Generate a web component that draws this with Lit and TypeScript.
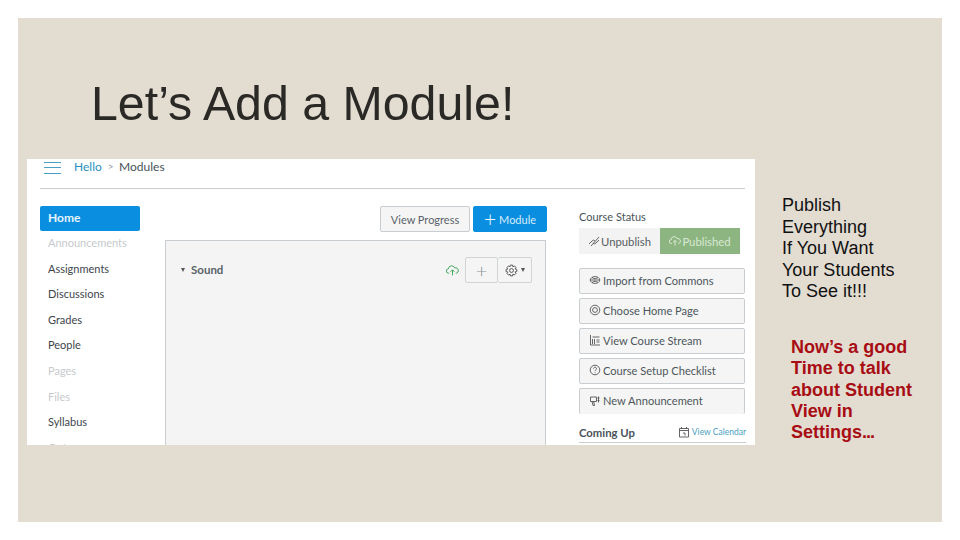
import { LitElement, html, css, svg } from 'lit';
import { customElement } from 'lit/decorators.js';

const navItems = [
  { label: 'Announcements', off: true },
  { label: 'Assignments' },
  { label: 'Discussions' },
  { label: 'Grades' },
  { label: 'People' },
  { label: 'Pages', off: true },
  { label: 'Files', off: true },
  { label: 'Syllabus' },
  { label: 'Outcomes', off: true },
];

const icon = (body: unknown, color = '#555') => html`<svg
  class="ico"
  viewBox="0 0 12 12"
  fill="none"
  stroke=${color}
  stroke-width="0.9"
>${body}</svg>`;

const cloud = svg`<path d="M3 8.500H2.400a2 2 0 0 1-.2-4A3 3 0 0 1 8 3.600a2.400 2.400 0 0 1 1.600 4.900H9" /><path d="M6 10.500V5.500M4.200 7.200 6 5.400l1.800 1.800" />`;

const sideButtons = [
  {
    label: 'Import from Commons',
    glyph: svg`<ellipse cx="6" cy="6" rx="4.800" ry="3.400" /><path d="M1.200 6h9.600M3 3.500c2 1.600 4 1.600 6 0M3 8.500c2-1.600 4-1.600 6 0" />`,
  },
  {
    label: 'Choose Home Page',
    glyph: svg`<circle cx="6" cy="6" r="4.800" /><circle cx="6" cy="6" r="2.400" />`,
  },
  {
    label: 'View Course Stream',
    glyph: svg`<path d="M1.500 1v10M1.500 11h9.500M3.500 3h7M3.500 5v5M5.500 5v5M7.500 6h3M7.500 8h3" />`,
  },
  {
    label: 'Course Setup Checklist',
    glyph: svg`<circle cx="6" cy="6" r="4.800" /><path d="M4.500 4.600a1.500 1.500 0 1 1 2.200 1.400c-.5.3-.7.6-.7 1.100M6 8.300v.8" />`,
  },
  {
    label: 'New Announcement',
    glyph: svg`<path d="M1.500 2h6v4.500h-6zM3 6.500l1 4h1.500l-.8-4M9.500 1.500v6M8.500 3h2M8.500 5.500h2" />`,
  },
];

@customElement('app-root')
export class AppRoot extends LitElement {
  static styles = css`
    :host {
      display: block;
      width: 960px;
      height: 540px;
      padding: 18px;
      box-sizing: border-box;
      background: #fff;
      font-family: 'Liberation Sans', Arial, sans-serif;
    }

    .slide {
      height: 504px;
      padding-left: 9px;
      background: #e2dcd1;
      overflow: hidden;
    }

    .title {
      height: 141px;
      box-sizing: border-box;
      margin: 0 0 0 64px;
      padding-top: 57px;
      color: #2a2926;
      font-size: 48.300px;
      line-height: 56px;
      font-weight: 400;
    }

    .row {
      display: flex;
    }

    .shot {
      width: 728px;
      height: 286px;
      flex: none;
      background: #fff;
      overflow: hidden;
      font-family: Lato, sans-serif;
      color: #3d454c;
    }

    .crumbs {
      height: 29px;
      margin: 0 10px 0 13px;
      border-bottom: 1px solid #c7cdd1;
      display: flex;
      align-items: flex-start;
      font-size: 12px;
      line-height: 15px;
    }

    .burger {
      width: 17px;
      height: 12px;
      margin: 3px 13px 0 4px;
      border-top: 1px solid #4a9fc4;
      border-bottom: 1px solid #4a9fc4;
      position: relative;
      box-sizing: border-box;
    }

    .burger::after {
      content: '';
      position: absolute;
      left: 0;
      right: 0;
      top: 4px;
      height: 1px;
      background: #4a9fc4;
    }

    .crumbs a {
      color: #2d8fc0;
    }

    .crumbs .sep {
      margin: 0 5.500px 0 6px;
      color: #8b969e;
      font-size: 10px;
    }

    .crumbs .here {
      color: #4a5359;
    }

    .body {
      display: flex;
      padding: 17px 0 0 13px;
    }

    .nav {
      width: 100px;
      flex: none;
      margin-right: 25px;
    }

    .nav div {
      height: 25.600px;
      padding-left: 8px;
      font-size: 11px;
      line-height: 25.600px;
      white-space: nowrap;
    }

    .nav .off {
      color: #c6cacd;
    }

    .nav .home {
      height: 25px;
      margin-bottom: -1px;
      background: #0a8fe0;
      border-radius: 2px;
      color: #e6f4fc;
      font-weight: 700;
      font-size: 12px;
      line-height: 23px;
    }

    .main {
      width: 381px;
      flex: none;
      margin-right: 33px;
    }

    .actions {
      display: flex;
      justify-content: flex-end;
      gap: 3px;
      margin-right: -1px;
      height: 34px;
    }

    .btn {
      height: 26px;
      box-sizing: border-box;
      display: flex;
      align-items: center;
      justify-content: center;
      border: 1px solid #c7cdd1;
      border-radius: 2px;
      background: #f5f5f5;
      font-size: 11px;
      white-space: nowrap;
    }

    .progress {
      width: 90px;
      color: #5a6268;
    }

    .add {
      width: 74px;
      gap: 3px;
      border-color: #0a8fe0;
      background: #0a8fe0;
      color: #d5ecfa;
    }

    .add b {
      font-weight: 300;
      font-size: 21px;
      line-height: 18px;
      color: #fff;
    }

    .panel {
      height: 260px;
      box-sizing: border-box;
      border: 1px solid #c7cdd1;
      background: #f4f4f4;
      padding: 16px 13px 0 15px;
    }

    .module {
      display: flex;
      align-items: center;
      height: 26px;
      font-size: 11.500px;
      font-weight: 700;
      color: #5a6268;
    }

    .caret {
      width: 0;
      height: 0;
      margin-right: 6px;
      border-left: 2.500px solid transparent;
      border-right: 2.500px solid transparent;
      border-top: 4px solid #555;
    }

    .module .name {
      flex: 1;
      padding-bottom: 2px;
    }

    .module .ico {
      width: 13px;
      height: 13px;
    }

    .tool {
      height: 26px;
      box-sizing: border-box;
      display: flex;
      align-items: center;
      justify-content: center;
      border: 1px solid #d0d4d7;
      border-radius: 2px;
      background: #f5f5f5;
    }

    .tool.plus {
      width: 33px;
      margin-left: 6px;
      color: #8b9298;
      font-size: 20px;
      font-weight: 300;
    }

    .tool.gear {
      width: 34px;
      gap: 3px;
      border-left: 0;
    }

    .tool.gear .caret {
      margin: 0;
    }

    .aside {
      width: 166px;
      flex: none;
      margin-top: 3px;
    }

    .aside h4 {
      margin: 0 0 4px;
      height: 15px;
      font-size: 11px;
      line-height: 15px;
      font-weight: 400;
      color: #4a5359;
    }

    .status {
      display: flex;
      height: 26px;
      width: 161px;
      margin-bottom: 14px;
      font-size: 11.300px;
    }

    .status div {
      display: flex;
      align-items: center;
      justify-content: center;
      gap: 1px;
    }

    .unpub {
      width: 81px;
      background: #f3f3f3;
      color: #555c62;
    }

    .pub {
      flex: 1;
      background: #8db581;
      color: #d8e8d3;
    }

    .ico {
      width: 12px;
      height: 12px;
      flex: none;
    }

    .side {
      display: flex;
      flex-direction: column;
      gap: 4px;
    }

    .side .btn {
      justify-content: flex-start;
      gap: 2px;
      padding: 0 0 2px 9px;
      color: #4d555b;
      font-size: 11.100px;
    }

    .side .btn:last-child {
      border-bottom: 0;
    }

    .coming {
      display: flex;
      align-items: center;
      justify-content: space-between;
      height: 26px;
      margin: 3px -1px 0 0;
      padding-top: 5px;
      box-sizing: border-box;
      border-bottom: 1px solid #c7cdd1;
      font-size: 11.300px;
      font-weight: 700;
      color: #4a5359;
    }

    .coming span {
      display: flex;
      align-items: center;
      gap: 2px;
      font-size: 8.500px;
      font-weight: 400;
      color: #4a9fc4;
    }

    .notes {
      padding: 36px 0 0 27px;
      font-size: 18px;
      line-height: 21.600px;
      color: #111;
    }

    .notes p {
      margin: 0;
    }

    .notes .red {
      margin: 34px 0 0 9px;
      line-height: 21.300px;
      font-weight: 700;
      color: #a80d14;
    }

    .dots {
      letter-spacing: -1px;
    }
  `;

  render() {
    return html`
      <div class="slide">
        <h1 class="title">Let’s Add a Module!</h1>
        <div class="row">
          <div class="shot">
            <div class="crumbs">
              <div class="burger"></div>
              <a>Hello</a><span class="sep">&gt;</span><span class="here">Modules</span>
            </div>
            <div class="body">
              <div class="nav">
                <div class="home">Home</div>
                ${navItems.map(
                  (item) => html`<div class=${item.off ? 'off' : ''}>${item.label}</div>`
                )}
              </div>
              <div class="main">
                <div class="actions">
                  <div class="btn progress">View Progress</div>
                  <div class="btn add"><b>+</b>Module</div>
                </div>
                <div class="panel">
                  <div class="module">
                    <i class="caret"></i>
                    <span class="name">Sound</span>
                    ${icon(cloud, '#3fa75a')}
                    <div class="tool plus">+</div>
                    <div class="tool gear">
                      ${icon(
                        svg`<circle cx="6" cy="6" r="1.800" /><path d="M5 1h2l.3 1.600 1.400-.8 1.400 1.400-.8 1.400 1.600.4v2l-1.600.3.8 1.400-1.400 1.400-1.400-.8L7 11H5l-.3-1.600-1.400.8-1.400-1.400.8-1.400L1 7V5l1.600-.4-.8-1.400 1.400-1.400 1.400.8z" />`
                      )}
                      <i class="caret"></i>
                    </div>
                  </div>
                </div>
              </div>
              <div class="aside">
                <h4>Course Status</h4>
                <div class="status">
                  <div class="unpub">
                    ${icon(svg`<path d="M1 9 4 6a2 2 0 0 1 3 0M5 8a2 2 0 0 0 3 0l3-3M3 11 11 2" />`)}Unpublish
                  </div>
                  <div class="pub">${icon(cloud, '#e4f0e0')}Published</div>
                </div>
                <div class="side">
                  ${sideButtons.map((b) => html`<div class="btn">${icon(b.glyph)}${b.label}</div>`)}
                </div>
                <div class="coming">
                  Coming Up
                  <span>
                    ${icon(svg`<path d="M1.500 2.500h9v8.500h-9zM1.500 4.500h9M3.500 1v2M8.500 1v2M5 7h2v2.500" />`)}View Calendar
                  </span>
                </div>
              </div>
            </div>
          </div>
          <div class="notes">
            <p>Publish<br />Everything<br />If You Want<br />Your Students<br />To See it!!!</p>
            <p class="red">Now’s a good<br />Time to talk<br />about Student<br />View in<br />Settings<span class="dots">...</span></p>
          </div>
        </div>
      </div>
    `;
  }
}
